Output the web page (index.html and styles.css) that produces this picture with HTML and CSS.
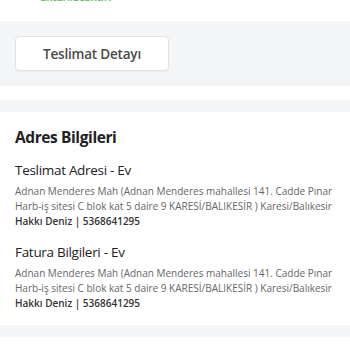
FILE: index.html
```html
<!DOCTYPE html>
<html lang="tr">
<head>
<meta charset="utf-8">
<link rel="stylesheet" href="styles.css">
</head>
<body>
<div class="notice"><p class="notice-text">aktarılacaktır.</p></div>
<div class="band">
  <button class="btn">Teslimat Detayı</button>
</div>
<div class="gap"></div>
<div class="sep"></div>
<section class="card">
  <h2 class="title">Adres Bilgileri</h2>
  <h3 class="subtitle">Teslimat Adresi - Ev</h3>
  <p class="addr"><span class="line">Adnan Menderes Mah (Adnan Menderes mahallesi 141. Cadde Pınar</span><span class="line">Harb-iş sitesi C blok kat 5 daire 9 KARESİ/BALIKESİR ) Karesi/Balıkesir</span><b class="line name">Hakkı Deniz | 5368641295</b></p>
  <h3 class="subtitle sub2">Fatura Bilgileri - Ev</h3>
  <p class="addr"><span class="line">Adnan Menderes Mah (Adnan Menderes mahallesi 141. Cadde Pınar</span><span class="line">Harb-iş sitesi C blok kat 5 daire 9 KARESİ/BALIKESİR ) Karesi/Balıkesir</span><b class="line name">Hakkı Deniz | 5368641295</b></p>
</section>
<div class="sep"></div>
</body>
</html>
```
FILE: styles.css
```css
* { box-sizing: border-box; }
html, body { margin: 0; padding: 0; background: #fff; }
body { font-family: "Open Sans", "Noto Sans", sans-serif; width: 350px; overflow: hidden; }

.notice { height: 21px; overflow: hidden; padding-left: 40px; }
.notice-text { margin: -9px 0 0; font-size: 11px; line-height: 12px; font-weight: 600; letter-spacing: -0.2px; color: #5cb85c; }

.band { background: #f4f5f7; padding: 15px 15px; height: 65px; }
.btn {
  display: block; width: 154px; height: 35px; margin: 0;
  background: #fff; border: 1px solid #e2e3e6; border-radius: 4px;
  box-shadow: 0 1px 1px rgba(0,0,0,0.04);
  font-family: inherit; font-size: 13.5px; font-weight: 600; letter-spacing: -0.2px; color: #4a4a4a;
  text-align: center; padding: 0;
}
.gap { height: 14px; }
.sep { height: 12px; background: #f4f5f7; }

.card { padding: 15px 15px 14px; }
.title { margin: 0; font-size: 15.5px; line-height: 20px; font-weight: 700; letter-spacing: -0.4px; color: #222; }
.subtitle { margin: 13px 0 4px; font-size: 13.5px; line-height: 20px; font-weight: 500; letter-spacing: -0.3px; color: #222; }
.sub2 { margin-top: 13px; }
.addr { margin: 0; font-size: 10px; line-height: 15px; font-weight: 500; color: #666; }
.line { display: block; white-space: nowrap; }
.name { font-weight: 600; color: #333; }
```
